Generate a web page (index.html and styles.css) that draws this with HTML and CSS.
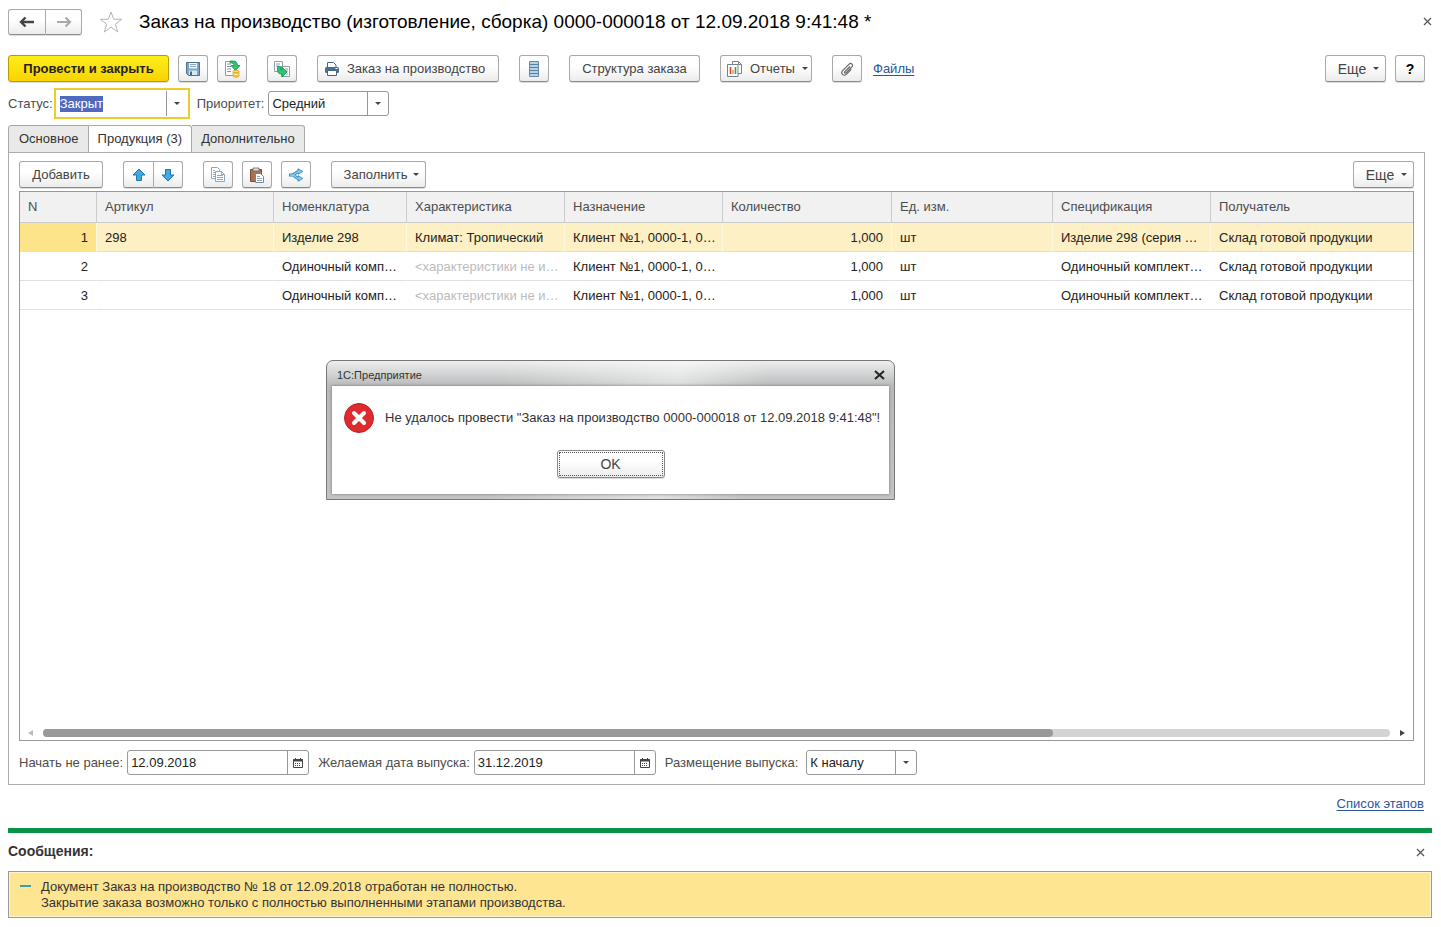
FILE: index.html
```html
<!DOCTYPE html>
<html lang="ru">
<head>
<meta charset="utf-8">
<title>Заказ на производство</title>
<link rel="stylesheet" href="styles.css">
</head>
<body>
<main class="form">
  <header class="titlebar">
    <div class="group">
      <button class="btn icon-btn nav-btn" type="button" aria-label="Назад"><svg width="16" height="12" viewBox="0 0 16 12"><path d="M2 6h13M6.500 1.500L2 6l4.500 4.500" fill="none" stroke="#444" stroke-width="2.400"/></svg></button>
      <button class="btn icon-btn nav-btn" type="button" aria-label="Вперед"><svg width="16" height="12" viewBox="0 0 16 12"><path d="M1 6h13M9.500 1.500L14 6l-4.500 4.500" fill="none" stroke="#aaa" stroke-width="2.200"/></svg></button>
    </div>
    <svg class="star" width="24" height="22" viewBox="0 0 24 22"><path d="M12 1l2.700 7.300h8.100l-6.500 4.900 2.500 7.800-6.800-4.800-6.800 4.800 2.500-7.800L1.200 8.300h8.100z" fill="#fff" stroke="#b4b4b4"/></svg>
    <h1 class="title">Заказ на производство (изготовление, сборка) 0000-000018 от 12.09.2018 9:41:48 *</h1>
    <button class="close" type="button" aria-label="Закрыть"><svg width="9" height="9" viewBox="0 0 9 9"><path d="M1 1l7 7M8 1L1 8" stroke="#555" stroke-width="1.200"/></svg></button>
  </header>

  <div class="toolbar">
    <button class="btn primary" type="button">Провести и закрыть</button>
    <button class="btn icon-btn" type="button" aria-label="Записать"><svg width="16" height="16" viewBox="0 0 16 16"><path d="M1.500 1.500h13v13h-11l-2-2z" fill="#7fa5c2" stroke="#4d708c"/><path d="M4 2h8v5.500H4z" fill="#eef5fa"/><path d="M5 3.500h6M5 5.500h6" stroke="#8aa9c2"/><path d="M4 9.500h8V14H4z" fill="#dbe7f0"/><path d="M5 10.500h2V14H5z" fill="#44698a"/></svg></button>
    <button class="btn icon-btn" type="button" aria-label="Провести"><svg width="18" height="18" viewBox="0 0 18 18"><path d="M2.500 1.500h10v14h-10z" fill="#fff" stroke="#8a9aa8"/><path d="M4 4h4M4 6.500h4M4 9h4M4 11.500h4" stroke="#7a9ab2"/><path d="M7 1h3c3 0 4.500 2 4.500 4.500H17L12.500 10.500 8 5.500h3C11 4 10 2.800 7 2.800z" fill="#2fc574" stroke="#12904b" stroke-width=".8"/><path d="M10 11.500v4.500c0 1.500 6 1.500 6 0v-4.500z" fill="#f5c93d" stroke="#d9a51e" stroke-width=".8"/><path d="M10.500 14c1.500.8 3.500.8 5 0" fill="none" stroke="#fff3b8"/><ellipse cx="13" cy="11.500" rx="3" ry="1.200" fill="#fbe27d" stroke="#d9a51e" stroke-width=".8"/></svg></button>
    <button class="btn icon-btn gap-l" type="button" aria-label="Создать на основании"><svg width="18" height="18" viewBox="0 0 18 18"><path d="M1.500 1.500h8v10h-8zM8.500 6.500h8v10h-8z" fill="#fff" stroke="#8aa0b0"/><path d="M3 4h4M3 6h3M12 9h3M13 11h2M13 14h2" stroke="#8aa0b0"/><path d="M4.500 6.500h3v2.500c0 1 .5 1 1.500 1V7l5 5-5 5v-3c-3 0-4.500-1-4.500-4z" fill="#2fc574" stroke="#12904b" stroke-width=".8"/></svg></button>
    <button class="btn print gap-l" type="button"><svg width="16" height="16" viewBox="0 0 16 16"><path d="M3.500 1.500h6l2.500 2.500v3h-8.500z" fill="#fff" stroke="#47657f"/><rect x="1" y="6" width="14" height="6" rx="1.500" fill="#47708f"/><path d="M3.500 9.500h9v5h-9z" fill="#fff" stroke="#47657f"/><path d="M11.500 7.500h2" stroke="#fff"/></svg>Заказ на производство</button>
    <button class="btn icon-btn gap-l" type="button" aria-label="Реестр"><svg width="10" height="16" viewBox="0 0 10 16"><path d="M.5.500h9v15h-9z" fill="#b9d3e6" stroke="#6488a4"/><path d="M1 3.500h8M1 6.500h8M1 9.500h8M1 12.500h8" stroke="#54809f"/></svg></button>
    <button class="btn structure gap-l" type="button">Структура заказа</button>
    <button class="btn reports gap-l" type="button"><svg width="16" height="16" viewBox="0 0 16 16"><path d="M5.500 11V.500h6l3 3v9H11" fill="#fff" stroke="#72828f"/><path d="M11.500.500v3h3" fill="none" stroke="#72828f"/><path d="M.5 3.500h10.500v12H.5z" fill="#fff" stroke="#72828f"/><path d="M3.500 13V6" stroke="#d8402f" stroke-width="1.600"/><path d="M6 13V9" stroke="#e3a43a" stroke-width="1.600"/><path d="M8.500 13V6" stroke="#3f9e52" stroke-width="1.600"/></svg>Отчеты<i class="caret"></i></button>
    <button class="btn icon-btn gap-l" type="button" aria-label="Вложения"><svg width="14" height="14" viewBox="0 0 14 14"><path d="M10 4.500L4.800 9.700c-.8.800.3 1.900 1.100 1.100l6-6c1.900-1.900-.8-4.500-2.700-2.700L2.600 8.700c-2.500 2.500 1.200 6.200 3.700 3.700l5-5" fill="none" stroke="#666" stroke-width="1.200"/></svg></button>
    <a class="link" href="#">Файлы</a>
    <button class="btn more push" type="button">Еще<i class="caret"></i></button>
    <button class="btn icon-btn help" type="button">?</button>
  </div>

  <div class="fields">
    <label for="status">Статус:</label>
    <span class="combo active"><input id="status" class="status" type="text" value="Закрыт" autofocus><button class="combo-btn" type="button" aria-label="Выбрать статус"><i class="caret"></i></button></span>
    <label for="priority">Приоритет:</label>
    <span class="combo"><select id="priority" class="priority"><option>Средний</option></select><span class="combo-btn"><i class="caret"></i></span></span>
  </div>

  <nav class="tabs" role="tablist">
    <button class="tab" type="button" role="tab">Основное</button>
    <button class="tab current" type="button" role="tab" aria-selected="true">Продукция (3)</button>
    <button class="tab" type="button" role="tab">Дополнительно</button>
  </nav>

  <section class="panel">
    <div class="toolbar inner">
      <button class="btn add" type="button">Добавить</button>
      <div class="group gap-l">
        <button class="btn icon-btn" type="button" aria-label="Вверх"><svg width="14" height="14" viewBox="0 0 14 14"><path d="M7 1l6 6h-3.500v5.500h-5V7H1z" fill="#3fa9e6" stroke="#2374a8"/></svg></button>
        <button class="btn icon-btn" type="button" aria-label="Вниз"><svg width="14" height="14" viewBox="0 0 14 14"><path d="M7 13l6-6h-3.500V1.500h-5V7H1z" fill="#3fa9e6" stroke="#2374a8"/></svg></button>
      </div>
      <button class="btn icon-btn gap-l" type="button" aria-label="Скопировать"><svg width="16" height="16" viewBox="0 0 16 16"><path d="M1.500.500h6l2 2v9h-8z" fill="#fff" stroke="#8fa9ba"/><path d="M3 3.500h2M3 5.500h2M3 7.500h2M3 9.500h2" stroke="#8fa9ba"/><path d="M5.500 4.500h6l3 3v7h-9z" fill="#fff" stroke="#8fa9ba"/><path d="M11.500 4.500v3h3M7 8.500h6M7 10.500h6M7 12.500h6" fill="none" stroke="#8fa9ba"/></svg></button>
      <button class="btn icon-btn" type="button" aria-label="Вставить"><svg width="16" height="16" viewBox="0 0 16 16"><path d="M1.500 2.500h11v12h-11z" fill="#a9714f" stroke="#7d4e34"/><path d="M4 1h6v3H4z" fill="#ddd" stroke="#666" stroke-width=".8"/><path d="M6.500 6.500h5l3 3v6h-8z" fill="#fff" stroke="#71889a"/><path d="M8 9.500h3M8 11.500h5M8 13.500h5" stroke="#8fa9ba"/></svg></button>
      <button class="btn icon-btn" type="button" aria-label="Разбить строку"><svg width="16" height="14" viewBox="0 0 16 14"><path d="M1 7h4M4 7c3 0 4-3.500 7-3.500M4 7c3 0 4 3.500 7 3.500" fill="none" stroke="#2f86bd" stroke-width="3"/><path d="M10 .8l4.800 2.700L10 6.200zM10 7.800l4.800 2.700-4.800 2.700z" fill="#8dcdf2" stroke="#2f86bd" stroke-width=".9"/><path d="M1.800 7H5M4 7c3 0 4-3.500 7-3.500M4 7c3 0 4 3.500 7 3.500" fill="none" stroke="#8dcdf2" stroke-width="1.300"/></svg></button>
      <button class="btn fill gap-l" type="button">Заполнить<i class="caret"></i></button>
      <button class="btn more push" type="button">Еще<i class="caret"></i></button>
    </div>

    <div class="grid">
      <table class="table">
        <colgroup><col class="c-n"><col class="c-art"><col class="c-nom"><col class="c-char"><col class="c-dest"><col class="c-qty"><col class="c-unit"><col class="c-spec"><col></colgroup>
        <thead>
          <tr><th>N</th><th>Артикул</th><th>Номенклатура</th><th>Характеристика</th><th>Назначение</th><th>Количество</th><th>Ед. изм.</th><th>Спецификация</th><th>Получатель</th></tr>
        </thead>
        <tbody>
          <tr class="selected"><td class="num">1</td><td>298</td><td>Изделие 298</td><td>Климат: Тропический</td><td>Клиент №1, 0000-1, 0…</td><td class="num">1,000</td><td>шт</td><td>Изделие 298 (серия …</td><td>Склад готовой продукции</td></tr>
          <tr><td class="num">2</td><td></td><td>Одиночный комп…</td><td class="muted">&lt;характеристики не и…</td><td>Клиент №1, 0000-1, 0…</td><td class="num">1,000</td><td>шт</td><td>Одиночный комплект…</td><td>Склад готовой продукции</td></tr>
          <tr><td class="num">3</td><td></td><td>Одиночный комп…</td><td class="muted">&lt;характеристики не и…</td><td>Клиент №1, 0000-1, 0…</td><td class="num">1,000</td><td>шт</td><td>Одиночный комплект…</td><td>Склад готовой продукции</td></tr>
        </tbody>
      </table>
      <div class="scroll">
        <i class="arrow left"></i>
        <div class="track"><div class="thumb"></div></div>
        <i class="arrow right"></i>
      </div>
    </div>

    <div class="fields bottom">
      <label for="start">Начать не ранее:</label>
      <span class="combo"><input id="start" class="date" type="text" value="12.09.2018"><button class="combo-btn" type="button" aria-label="Календарь"><svg width="10" height="10" viewBox="0 0 10 10"><path d="M.5 1.500h9v8h-9z" fill="#fff" stroke="#444"/><path d="M0 2.500h10" stroke="#444" stroke-width="2"/><path d="M2.500 0v2M7.500 0v2" stroke="#444"/><path d="M2 5.500h6M2 7.500h6" stroke="#444" stroke-dasharray="1 1"/></svg></button></span>
      <label for="finish">Желаемая дата выпуска:</label>
      <span class="combo"><input id="finish" class="date" type="text" value="31.12.2019"><button class="combo-btn" type="button" aria-label="Календарь"><svg width="10" height="10" viewBox="0 0 10 10"><path d="M.5 1.500h9v8h-9z" fill="#fff" stroke="#444"/><path d="M0 2.500h10" stroke="#444" stroke-width="2"/><path d="M2.500 0v2M7.500 0v2" stroke="#444"/><path d="M2 5.500h6M2 7.500h6" stroke="#444" stroke-dasharray="1 1"/></svg></button></span>
      <label for="place">Размещение выпуска:</label>
      <span class="combo wide-gap"><select id="place" class="place"><option>К началу</option></select><span class="combo-btn"><i class="caret"></i></span></span>
    </div>
  </section>

  <div class="stages"><a class="link" href="#">Список этапов</a></div>

  <section class="messages">
    <div class="messages-head">
      <h2 class="messages-title">Сообщения:</h2>
      <button class="close" type="button" aria-label="Закрыть сообщения"><svg width="9" height="9" viewBox="0 0 9 9"><path d="M1 1l7 7M8 1L1 8" stroke="#555" stroke-width="1.200"/></svg></button>
    </div>
    <div class="message"><i class="dash"></i><p class="message-text">Документ Заказ на производство № 18 от 12.09.2018 отработан не полностью.<br>Закрытие заказа возможно только с полностью выполненными этапами производства.</p></div>
  </section>
</main>

<div class="dialog" role="alertdialog" aria-labelledby="dlg-title">
  <div class="dialog-head">
    <span id="dlg-title">1С:Предприятие</span>
    <button class="close" type="button" aria-label="Закрыть окно"><svg width="11" height="10" viewBox="0 0 11 10"><path d="M1 1l9 8M10 1L1 9" stroke="#222" stroke-width="2"/></svg></button>
  </div>
  <div class="dialog-body">
    <div class="dialog-text">
      <svg width="30" height="30" viewBox="0 0 30 30"><circle cx="15" cy="15" r="14.500" fill="#dd2b2f" stroke="#b92327"/><path d="M10 10l10 10M20 10L10 20" stroke="#fff" stroke-width="4" stroke-linecap="round"/></svg>
      <span>Не удалось провести "Заказ на производство 0000-000018 от 12.09.2018 9:41:48"!</span>
    </div>
    <button class="btn ok" type="button">OK</button>
  </div>
</div>
<script src="script.js"></script>
</body>
</html>
```
FILE: styles.css
```css
* { box-sizing: border-box; }
body {
  margin: 0;
  background: #fff;
  color: #333;
  font: 13px/16px "Liberation Sans", Arial, sans-serif;
}
button, input, select { font: inherit; color: inherit; margin: 0; }
svg { display: block; flex: none; }

.form {
  display: flex;
  flex-direction: column;
  min-height: 100vh;
  padding: 8px 9px 9px 8px;
}

/* Title */
.titlebar { display: flex; align-items: center; height: 27px; margin-bottom: 20px; }
.star { margin: 0 16px 0 17px; }
.title { margin: 0; color: #000; font-size: 19px; line-height: 24px; font-weight: normal; white-space: nowrap; }
.close { display: flex; margin-left: auto; padding: 0; border: 0; background: none; }

/* Buttons */
.btn {
  display: inline-flex;
  align-items: center;
  justify-content: center;
  height: 27px;
  padding: 0 8px;
  border: 1px solid #a9a9a9;
  border-bottom-color: #8c8c8c;
  border-radius: 3px;
  background: linear-gradient(#fff 40%, #ececec);
  box-shadow: 0 1px 0 #ddd;
  color: #444;
  white-space: nowrap;
}
.icon-btn { width: 30px; padding: 0; }
.group { display: flex; }
.group .btn:first-child { border-radius: 3px 0 0 3px; border-right: 0; }
.group .btn:last-child { border-radius: 0 3px 3px 0; }
.nav-btn { width: 37px; height: 26px; }
.primary {
  width: 161px;
  border-color: #b89b00;
  background: linear-gradient(#ffec1c, #f8d400);
  color: #222;
  font-weight: bold;
}
.print { width: 182px; gap: 7px; justify-content: flex-start; padding: 0 6px; }
.structure { width: 131px; }
.reports { width: 92px; gap: 7px; justify-content: flex-start; padding: 0 6px; }
.more { width: 61px; gap: 7px; padding: 0 6px 0 12px; font-size: 14px; }
.add { width: 84px; }
.fill { width: 95px; gap: 6px; padding: 0 6px 0 12px; }
.help { color: #000; font-size: 14px; font-weight: bold; }
.caret { width: 0; height: 0; border: 3px solid transparent; border-top-color: #444; border-bottom: 0; }

.toolbar { display: flex; align-items: center; gap: 9px; padding-right: 7px; margin-bottom: 6px; }
.toolbar .gap-l { margin-left: 11px; }
.toolbar .push { margin-left: auto; }
.inner { padding-right: 0; margin-bottom: 3px; }
.link { color: #2a5699; text-underline-offset: 2px; }
.toolbar .link { margin-left: 2px; }

/* Fields */
.fields { display: flex; align-items: center; height: 31px; color: #4d4d4d; }
.combo {
  display: flex;
  height: 25px;
  margin: 0 9px 0 4px;
  border: 1px solid #999;
  border-radius: 3px;
  background: #fff;
  color: #222;
}
.combo input, .combo select {
  min-width: 0;
  padding: 0 3px;
  border: 0;
  outline: 0;
  background: none;
  appearance: none;
}
.combo-btn {
  display: flex;
  align-items: center;
  justify-content: center;
  width: 21px;
  padding: 0;
  border: 0;
  border-left: 1px solid #999;
  background: none;
}
.active { height: 31px; margin: 0 7px 0 1px; padding: 1px; border: 2px solid #f0cb30; border-radius: 0; }
.wide-gap { margin-left: 8px; }
.combo .status { width: 109px; }
.status::selection { background: #5068c0; color: #fff; }
.combo .priority { width: 98px; }
.combo .date { width: 159px; }
.combo .place { width: 88px; }

/* Tabs */
.tabs { display: flex; height: 28px; margin: 6px 0 -1px; }
.tab {
  padding: 0 9px;
  border: 1px solid #a9a9a9;
  border-left-width: 0;
  border-radius: 0 3px 0 0;
  background: #e9e9e9;
}
.tab:first-child { padding-left: 10px; border-left-width: 1px; border-radius: 3px 0 0 0; }
.current { border-bottom-color: #fff; background: #fff; }

.panel {
  display: flex;
  flex: 1;
  flex-direction: column;
  margin-right: 7px;
  padding: 8px 10px 9px;
  border: 1px solid #adadad;
}

/* Product table */
.grid { display: flex; flex: 1; flex-direction: column; border: 1px solid #999; }
.table { width: 100%; table-layout: fixed; border-collapse: separate; border-spacing: 0; }
.c-n { width: 77px; }
.c-art { width: 177px; }
.c-nom { width: 133px; }
.c-char, .c-dest, .c-spec { width: 158px; }
.c-qty { width: 169px; }
.c-unit { width: 161px; }
.table th, .table td { padding: 0 8px; text-align: left; white-space: nowrap; }
.table th {
  height: 31px;
  border-right: 1px solid #ccc;
  border-bottom: 1px solid #ccc;
  background: #f1f1f1;
  color: #4d4d4d;
  font-weight: normal;
}
.table td { height: 29px; padding: 2px 2px 0 8px; border-right: 1px solid transparent; border-bottom: 1px solid #e0e0e0; color: #222; }
.table .num { padding-right: 8px; text-align: right; }
.table .muted { color: #bbb; }
.table th:last-child { border-right: 0; }
.table .selected td { border-right-color: #fff8e0; background: #fdf0c4; }
.table .selected td:first-child { background: #fde38a; }

.scroll { display: flex; align-items: center; gap: 10px; height: 15px; margin-top: auto; padding: 0 8px; }
.track { flex: 1; height: 8px; border-radius: 4px; background: #d4d4d4; }
.thumb { width: 75%; height: 8px; border-radius: 4px; background: #999; }
.arrow { width: 5px; height: 0; border: 3px solid transparent; }
.left { border-right: 5px solid #bbb; border-left: 0; }
.right { border-left: 5px solid #444; border-right: 0; }

.bottom { height: 25px; margin-top: 9px; }

.stages { padding: 11px 8px 16px; text-align: right; }

/* Messages */
.messages { border-top: 5px solid #089447; }
.messages-head { display: flex; align-items: center; height: 38px; padding-right: 7px; }
.messages-title { margin: 0; font-size: 14px; line-height: 16px; padding-bottom: 2px; }
.message {
  display: flex;
  height: 47px;
  padding: 7px 11px;
  border: 1px solid #999;
  background: #fde591;
  box-shadow: inset 0 0 0 1px #fff6d0;
}
.dash { width: 11px; height: 2px; margin: 6px 10px 0 0; background: #3d9fae; }
.message-text { margin: 0; }

/* Error dialog */
.dialog {
  position: absolute;
  top: 360px;
  left: 326px;
  width: 569px;
  padding: 0 5px 5px;
  border: 1px solid #777;
  border-radius: 7px 7px 0 0;
  background: linear-gradient(100deg, transparent 30%, rgba(255, 255, 255, .5) 60%, transparent 75%), linear-gradient(#eee, #b8babb 25px, #c4c4c4);
}
.dialog-head { display: flex; align-items: center; height: 25px; padding: 3px 4px 0 5px; font-size: 11px; }
.dialog-body {
  display: flex;
  flex-direction: column;
  align-items: center;
  padding: 17px 12px 16px;
  background: #fff;
  box-shadow: 0 0 3px #777;
}
.dialog-text { display: flex; align-self: stretch; align-items: center; gap: 11px; white-space: nowrap; }
.ok { width: 108px; height: 28px; margin-top: 17px; border-color: #888; outline: 1px dotted #555; outline-offset: -3px; font-size: 14px; }
```
FILE: script.js
```js
const statusField = document.getElementById('status');
statusField.focus();
statusField.select();
```
